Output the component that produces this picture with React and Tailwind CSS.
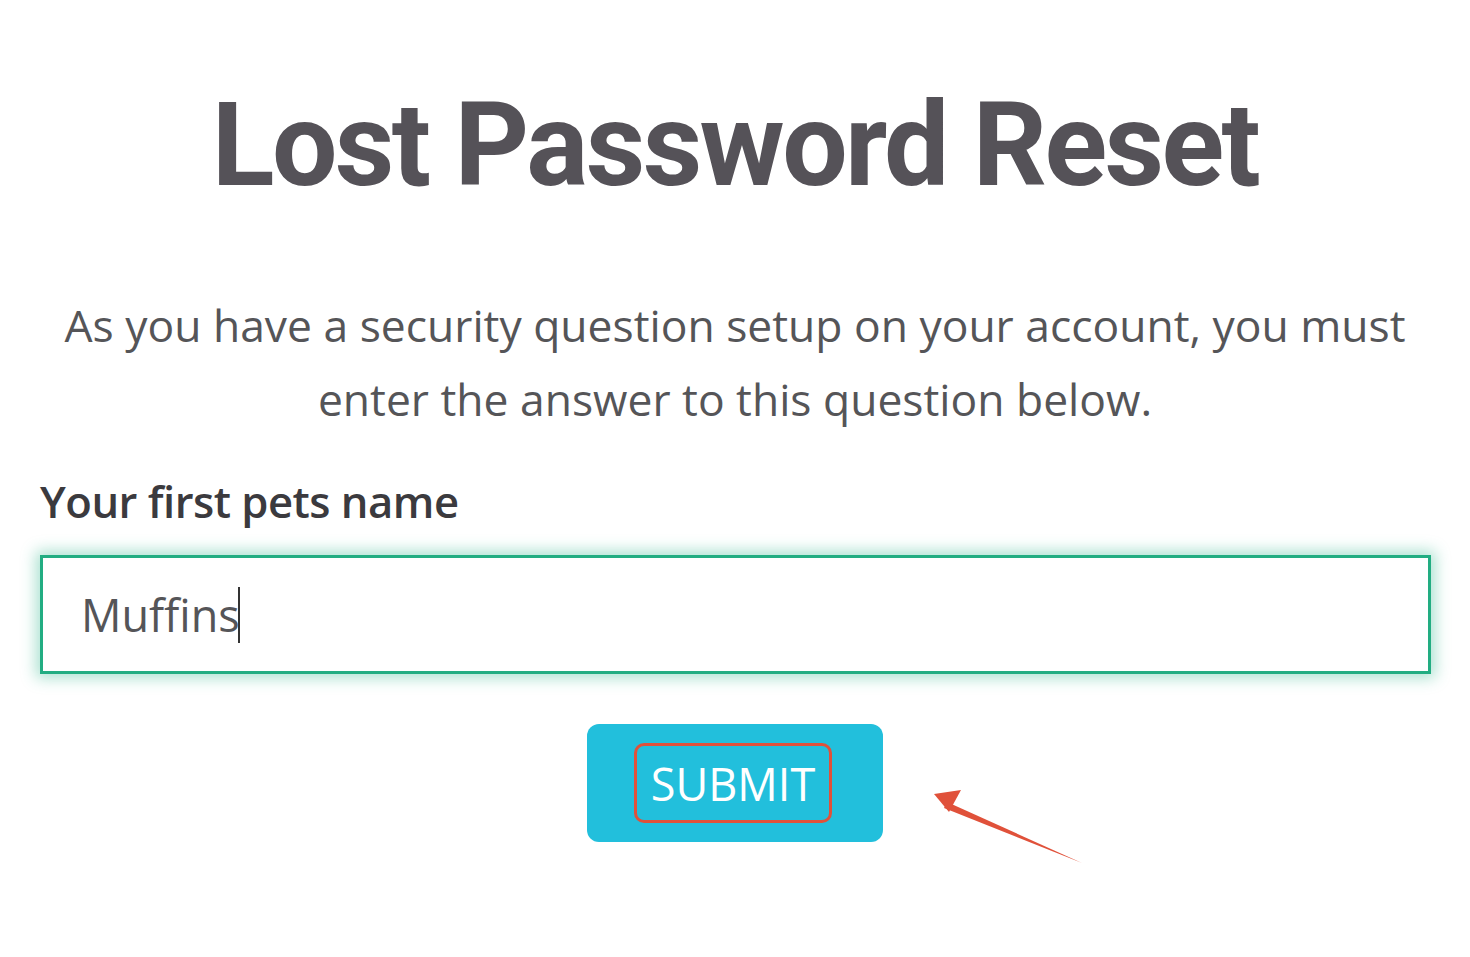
import React from "react";

function Arrow() {
  return (
    <svg
      className="absolute left-[925px] top-[782px]"
      width="170"
      height="95"
      viewBox="0 0 170 95"
    >
      <polygon points="157,81 22,20 19,26" fill="#e0513a" />
      <polygon points="9,12 36,8 24,30" fill="#e0513a" />
    </svg>
  );
}

export default function App() {
  return (
    <div className="relative min-h-[957px] w-full bg-white font-['Open_Sans',sans-serif]">
      <div className="flex flex-col items-center pt-[80px]">
        <h1 className="font-['Roboto',sans-serif] text-[116px] font-bold leading-[130px] tracking-[-2.6px] text-[#555258]">
          Lost Password Reset
        </h1>

        <p className="mt-[78px] w-[1400px] text-center text-[44.4px] leading-[74px] text-[#555558]">
          As you have a security question setup on your account, you must
          enter the answer to this question below.
        </p>
      </div>

      <div className="px-[40px] pt-[35px]">
        <label className="block text-[43.6px] font-semibold leading-[60px] tracking-[-0.5px] text-[#3b3a3e]">
          Your first pets name
        </label>

        <div className="mt-[24px] flex h-[119px] w-[1391px] items-center border-[3px] border-[#22ad82] bg-white pl-[38px] shadow-[0_0_14px_4px_rgba(43,180,138,0.4)]">
          <span className="text-[45px] text-[#555558]">Muffins</span>
          <span className="ml-[-2px] h-[56px] w-[2px] bg-[#333]" />
        </div>

        <div className="mt-[50px] flex justify-center">
          <div className="flex h-[118px] w-[296px] items-center justify-center rounded-[12px] bg-[#22bfdc]">
            <div className="mr-[4px] flex h-[80px] w-[198px] items-center justify-center rounded-[10px] border-[3px] border-[#e0513a]">
              <span className="text-[45px] leading-none text-white">SUBMIT</span>
            </div>
          </div>
        </div>
      </div>

      <Arrow />
    </div>
  );
}
